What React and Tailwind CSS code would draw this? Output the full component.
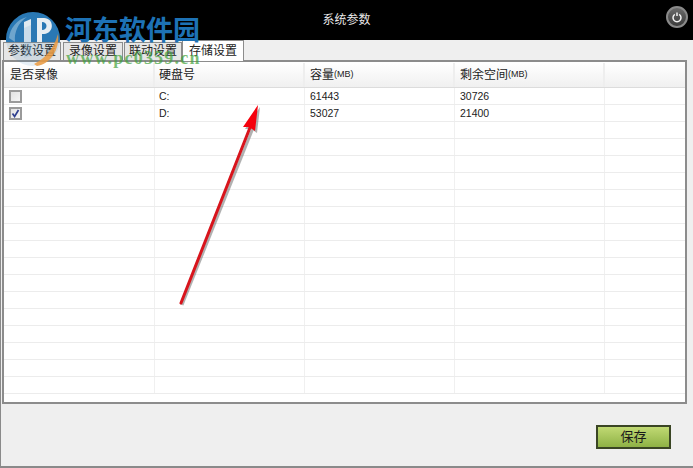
const font = { fontFamily: '"Liberation Sans", "Noto Sans CJK SC", sans-serif' }

const tabs = ['参数设置', '录像设置', '联动设置', '存储设置']
const columns = [
  { label: '是否录像', width: 'w-[151px]', pad: 'pl-[6px]', cellPad: 'pl-[5px]' },
  { label: '硬盘号', width: 'w-[150px]', pad: 'pl-[4px]', cellPad: 'pl-[4px]' },
  { label: '容量', unit: '(MB)', width: 'w-[150px]', pad: 'pl-[5px]', cellPad: 'pl-[5px]' },
  { label: '剩余空间', unit: '(MB)', width: 'w-[150px]', pad: 'pl-[5px]', cellPad: 'pl-[5px]' },
  { label: '', width: 'flex-1', pad: '', cellPad: '' },
]
const disks = [
  { checked: false, name: 'C:', total: '61443', free: '30726' },
  { checked: true, name: 'D:', total: '53027', free: '21400' },
]
const emptyRows = Array.from({ length: 16 }, (_, i) => i)

function Checkbox({ checked }) {
  return (
    <span className="flex h-[13px] w-[13px] items-center justify-center border-2 border-[#9a9a9a] bg-gradient-to-br from-[#e2e2e2] to-[#f6f6f6]">
      {checked ? (
        <svg width="9" height="9" viewBox="0 0 9 9">
          <path d="M1.5 4.5 L3.6 7.5 L7.5 1" fill="none" stroke="#2f3f8f" strokeWidth="1.7" />
        </svg>
      ) : null}
    </span>
  )
}

function Row({ cells }) {
  return (
    <div className="flex h-[17px] border-b border-[#ececec] text-[10.5px] leading-[15px] text-[#222]">
      {cells.map((cell, i) => (
        <div
          key={i}
          className={`${columns[i].width} ${columns[i].cellPad} flex items-center border-r border-[#f0f0f0] pt-px last:border-r-0`}
        >
          {cell}
        </div>
      ))}
    </div>
  )
}

export default function App() {
  return (
    <div className="relative flex h-[468px] w-[693px] flex-col overflow-hidden bg-[#efefef]" style={font}>
      <header className="relative flex h-10 shrink-0 items-center justify-center bg-black text-[12px] text-[#e8e8e8]">
        系统参数
        <span className="absolute right-[5px] top-[6px] flex h-[22px] w-[22px] items-center justify-center rounded-full border-2 border-[#8a8a8a] bg-gradient-to-b from-[#6a6a6a] to-[#3c3c3c]">
          <svg width="12" height="12" viewBox="0 0 12 12" fill="none" stroke="#f2f2f2" strokeWidth="1.5">
            <path d="M3.8 3.4 A4 4 0 1 0 8.2 3.4" />
            <path d="M6 1.5 V5" />
          </svg>
        </span>
      </header>

      <div className="flex flex-1 flex-col border-b-2 border-l border-[#8a8a8a]">
        <nav className="flex h-[20px] items-end pl-[2px] text-[12px] text-[#222]">
          <button className="mr-[2px] h-[18px] w-[58px] border border-b-0 border-[#8c8c8c] bg-[#e6e6e6] leading-[15px]">{tabs[0]}</button>
          <button className="mr-[1px] h-[18px] w-[60px] border border-b-0 border-[#8c8c8c] bg-[#e6e6e6] leading-[15px]">{tabs[1]}</button>
          <button className="h-[18px] w-[58px] border border-b-0 border-[#8c8c8c] bg-[#e6e6e6] leading-[15px]">{tabs[2]}</button>
          <button className="relative z-10 -mb-px h-[21px] w-[62px] border border-b-0 border-[#8c8c8c] bg-white leading-[17px]">{tabs[3]}</button>
        </nav>

        <section className="ml-px h-[344px] w-[685px] border-2 border-[#8c8c8c] bg-white pt-px">
          <div className="flex h-[25px] border-b border-[#dcdcdc] bg-gradient-to-b from-white to-[#f0f0f0] text-[12px] text-[#222]">
            {columns.map((col, i) => (
              <div key={i} className={`${col.width} ${col.pad} flex items-center border-r-2 border-[#eeeeee] last:border-r-0`}>
                {col.label}
                {col.unit ? <span className="text-[9px]">{col.unit}</span> : null}
              </div>
            ))}
          </div>
          {disks.map((disk) => (
            <Row
              key={disk.name}
              cells={[<Checkbox checked={disk.checked} />, disk.name, disk.total, disk.free, '']}
            />
          ))}
          {emptyRows.map((i) => (
            <Row key={i} cells={['', '', '', '', '']} />
          ))}
        </section>

        <div className="flex flex-1 items-start justify-end pr-[22px] pt-[21px]">
          <button className="h-[24px] w-[75px] border-2 border-[#3a4524] bg-gradient-to-b from-[#c0d973] to-[#8fb245] text-[13px] text-[#1a1a1a]">
            保存
          </button>
        </div>
      </div>

      {/* watermark logo */}
      <svg className="pointer-events-none absolute left-0 top-0 z-20" width="100" height="75" viewBox="0 0 100 75">
        <defs>
          <clipPath id="logoTop">
            <rect x="0" y="0" width="100" height="42" />
          </clipPath>
        </defs>
        <circle cx="33" cy="39" r="27" fill="#2a78b4" opacity="0.12" />
        <circle cx="33" cy="39" r="27" fill="#2a78b4" clipPath="url(#logoTop)" />
        <g clipPath="url(#logoTop)">
          <path d="M9 38 A 24 24 0 0 1 27 17 A 26 26 0 0 0 15 42 Z" fill="#9cc3de" opacity="0.6" />
          <path d="M24 22 L31 19 L31 42 L24 42 Z" fill="#dfe9f0" />
          <path d="M37 18 L44 18 C54 18 55 33 44 34 L42 34 L42 42 L37 42 Z M42 22 L42 30 C48 30 48 22 42 22 Z" fill="#e8eef2" />
        </g>
        <path d="M24 28 L31 25 L31 56 L24 58 Z" fill="#8bb7d6" opacity="0.25" />
        <path d="M34 64 C46 58 54 48 58 34 C60 50 50 64 37 66 Z" fill="#ec9a3e" opacity="0.85" />
      </svg>
      <div
        className="pointer-events-none absolute left-[65px] top-[12px] z-20 text-[27px] font-bold leading-[33px] text-[#1d72b5]"
        style={{ fontFamily: '"Noto Sans CJK SC", serif' }}
      >
        河东软件园
      </div>
      <div
        className="pointer-events-none absolute left-[66px] top-[49px] z-20 text-[18px] font-bold leading-[18px] tracking-[1.2px] text-[#3fa13a]/70"
        style={{ fontFamily: '"Liberation Serif", serif' }}
      >
        www.pc0359.cn
      </div>

      {/* red arrow */}
      <svg className="pointer-events-none absolute left-0 top-0 z-20" width="693" height="468" viewBox="0 0 693 468">
        <g fill="#555" opacity="0.45" transform="translate(2 2)">
          <path d="M180 303 L251 126" stroke="#555" strokeWidth="3" />
          <path d="M258 105 L243 127 L249 127 L255 131 Z" />
        </g>
        <path d="M181 303 L251 125" stroke="#d8141c" strokeWidth="3" strokeLinecap="round" />
        <path d="M258 105 L243 127 L249 127 L255 131 Z" fill="#f5000c" />
      </svg>
    </div>
  )
}
